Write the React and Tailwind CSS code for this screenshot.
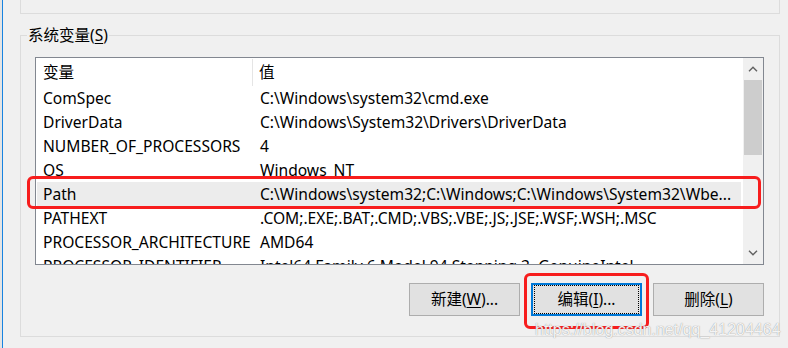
import React from 'react';

const rows = [
  { name: 'ComSpec', value: 'C:\\Windows\\system32\\cmd.exe' },
  { name: 'DriverData', value: 'C:\\Windows\\System32\\Drivers\\DriverData' },
  { name: 'NUMBER_OF_PROCESSORS', value: '4' },
  { name: 'OS', value: 'Windows_NT' },
  { name: 'Path', value: 'C:\\Windows\\system32;C:\\Windows;C:\\Windows\\System32\\Wbe...', selected: true },
  { name: 'PATHEXT', value: '.COM;.EXE;.BAT;.CMD;.VBS;.VBE;.JS;.JSE;.WSF;.WSH;.MSC' },
  { name: 'PROCESSOR_ARCHITECTURE', value: 'AMD64' },
  { name: 'PROCESSOR_IDENTIFIER', value: 'Intel64 Family 6 Model 94 Stepping 3, GenuineIntel' },
];

const font = "font-['Segoe_UI','Noto_Sans','Noto_Sans_CJK_SC',sans-serif]";

const Chevron = ({ up }) => (
  <svg width="10" height="6" viewBox="0 0 10 6" className="block">
    <path
      d={up ? 'M1 5.2 L5 1.2 L9 5.2' : 'M1 0.8 L5 4.8 L9 0.8'}
      fill="none"
      stroke="#606060"
      strokeWidth="1.4"
    />
  </svg>
);

const Button = ({ label, accel, rest, focused }) => (
  <button
    className={`w-[111px] h-[33px] flex items-center justify-center bg-[#e1e1e1] text-[15.5px] text-black ${
      focused ? 'border-2 border-[#0078d7]' : 'border border-[#adadad]'
    }`}
  >
    <span
      className={`w-full h-full flex items-center justify-center ${
        focused ? 'border border-dotted border-black m-[1px]' : ''
      }`}
    >
      {label}(<span className="underline underline-offset-2">{accel}</span>){rest}
    </span>
  </button>
);

export default function App() {
  return (
    <div className={`relative w-[788px] h-[348px] overflow-hidden bg-[#f0f0f0] ${font} text-black`}>
      {/* window edge on the left */}
      <div className="absolute left-0 top-0 h-full w-[2px] bg-[#e4e4e4]" />
      <div className="absolute left-[2px] top-0 h-full w-px bg-[#1883e0]" />

      {/* bottom of the user variables group */}
      <div className="ml-[20px] w-[760px] h-[14px] border-x border-b border-[#dcdcdc]" />

      {/* system variables group */}
      <fieldset className="mt-[11px] ml-[20px] w-[760px] h-[312px] border border-[#dcdcdc] pl-[14px] pr-[15px] pt-[12px]">
        <legend className="ml-[-8px] px-[1px] text-[15.5px] leading-[20px]">
          系统变量(<span className="underline underline-offset-2">S</span>)
        </legend>

        <div className="relative w-[729px] h-[208px] border border-[#828790] bg-white flex overflow-hidden">
          <div className="flex-1 flex flex-col text-[15.6px]">
            <div className="h-[28px] flex items-center shrink-0">
              <div className="w-[217px] h-[27px] flex items-center pl-[7px] pt-[2px] border-r border-[#e5e5e5]">变量</div>
              <div className="pl-[6px] pt-[2px]">值</div>
            </div>
            {rows.map((r) => (
              <div
                key={r.name}
                className={`h-[24px] shrink-0 flex items-center mx-px whitespace-nowrap ${r.selected ? 'bg-[#ececec]' : ''}`}
              >
                <div className="w-[216px] pl-[6px] pt-px">{r.name}</div>
                <div className="pl-[7px] pt-px">{r.value}</div>
              </div>
            ))}
          </div>

          {/* scrollbar */}
          <div className="w-[21px] shrink-0 bg-[#f0f0f0] flex flex-col items-center border-l border-white">
            <div className="h-[22px] flex items-center justify-center">
              <Chevron up />
            </div>
            <div className="w-[18px] h-[75px] bg-[#cdcdcd]" />
            <div className="flex-1" />
            <div className="h-[22px] flex items-center justify-center">
              <Chevron />
            </div>
          </div>
        </div>

        <div className="mt-[18px] flex justify-end gap-[11px]">
          <Button label="新建" accel="W" rest="..." />
          <Button label="编辑" accel="I" rest="..." focused />
          <Button label="删除" accel="L" rest="" />
        </div>
      </fieldset>

      {/* red annotations */}
      <div className="absolute left-[27px] top-[176px] w-[734px] h-[33px] border-[3px] border-[#f71d1d] rounded-[6px]" />
      <div className="absolute left-[524px] top-[273px] w-[125px] h-[56px] border-[3px] border-[#f71d1d] rounded-[6px]" />

      {/* watermark */}
      <div className="absolute left-[535px] top-[320px] text-[16px] leading-[20px] font-['Liberation_Sans',sans-serif] text-white/90 [text-shadow:0_0_1px_#7a7a7a]">
        https://blog.csdn.net/qq_41204464
      </div>
    </div>
  );
}
